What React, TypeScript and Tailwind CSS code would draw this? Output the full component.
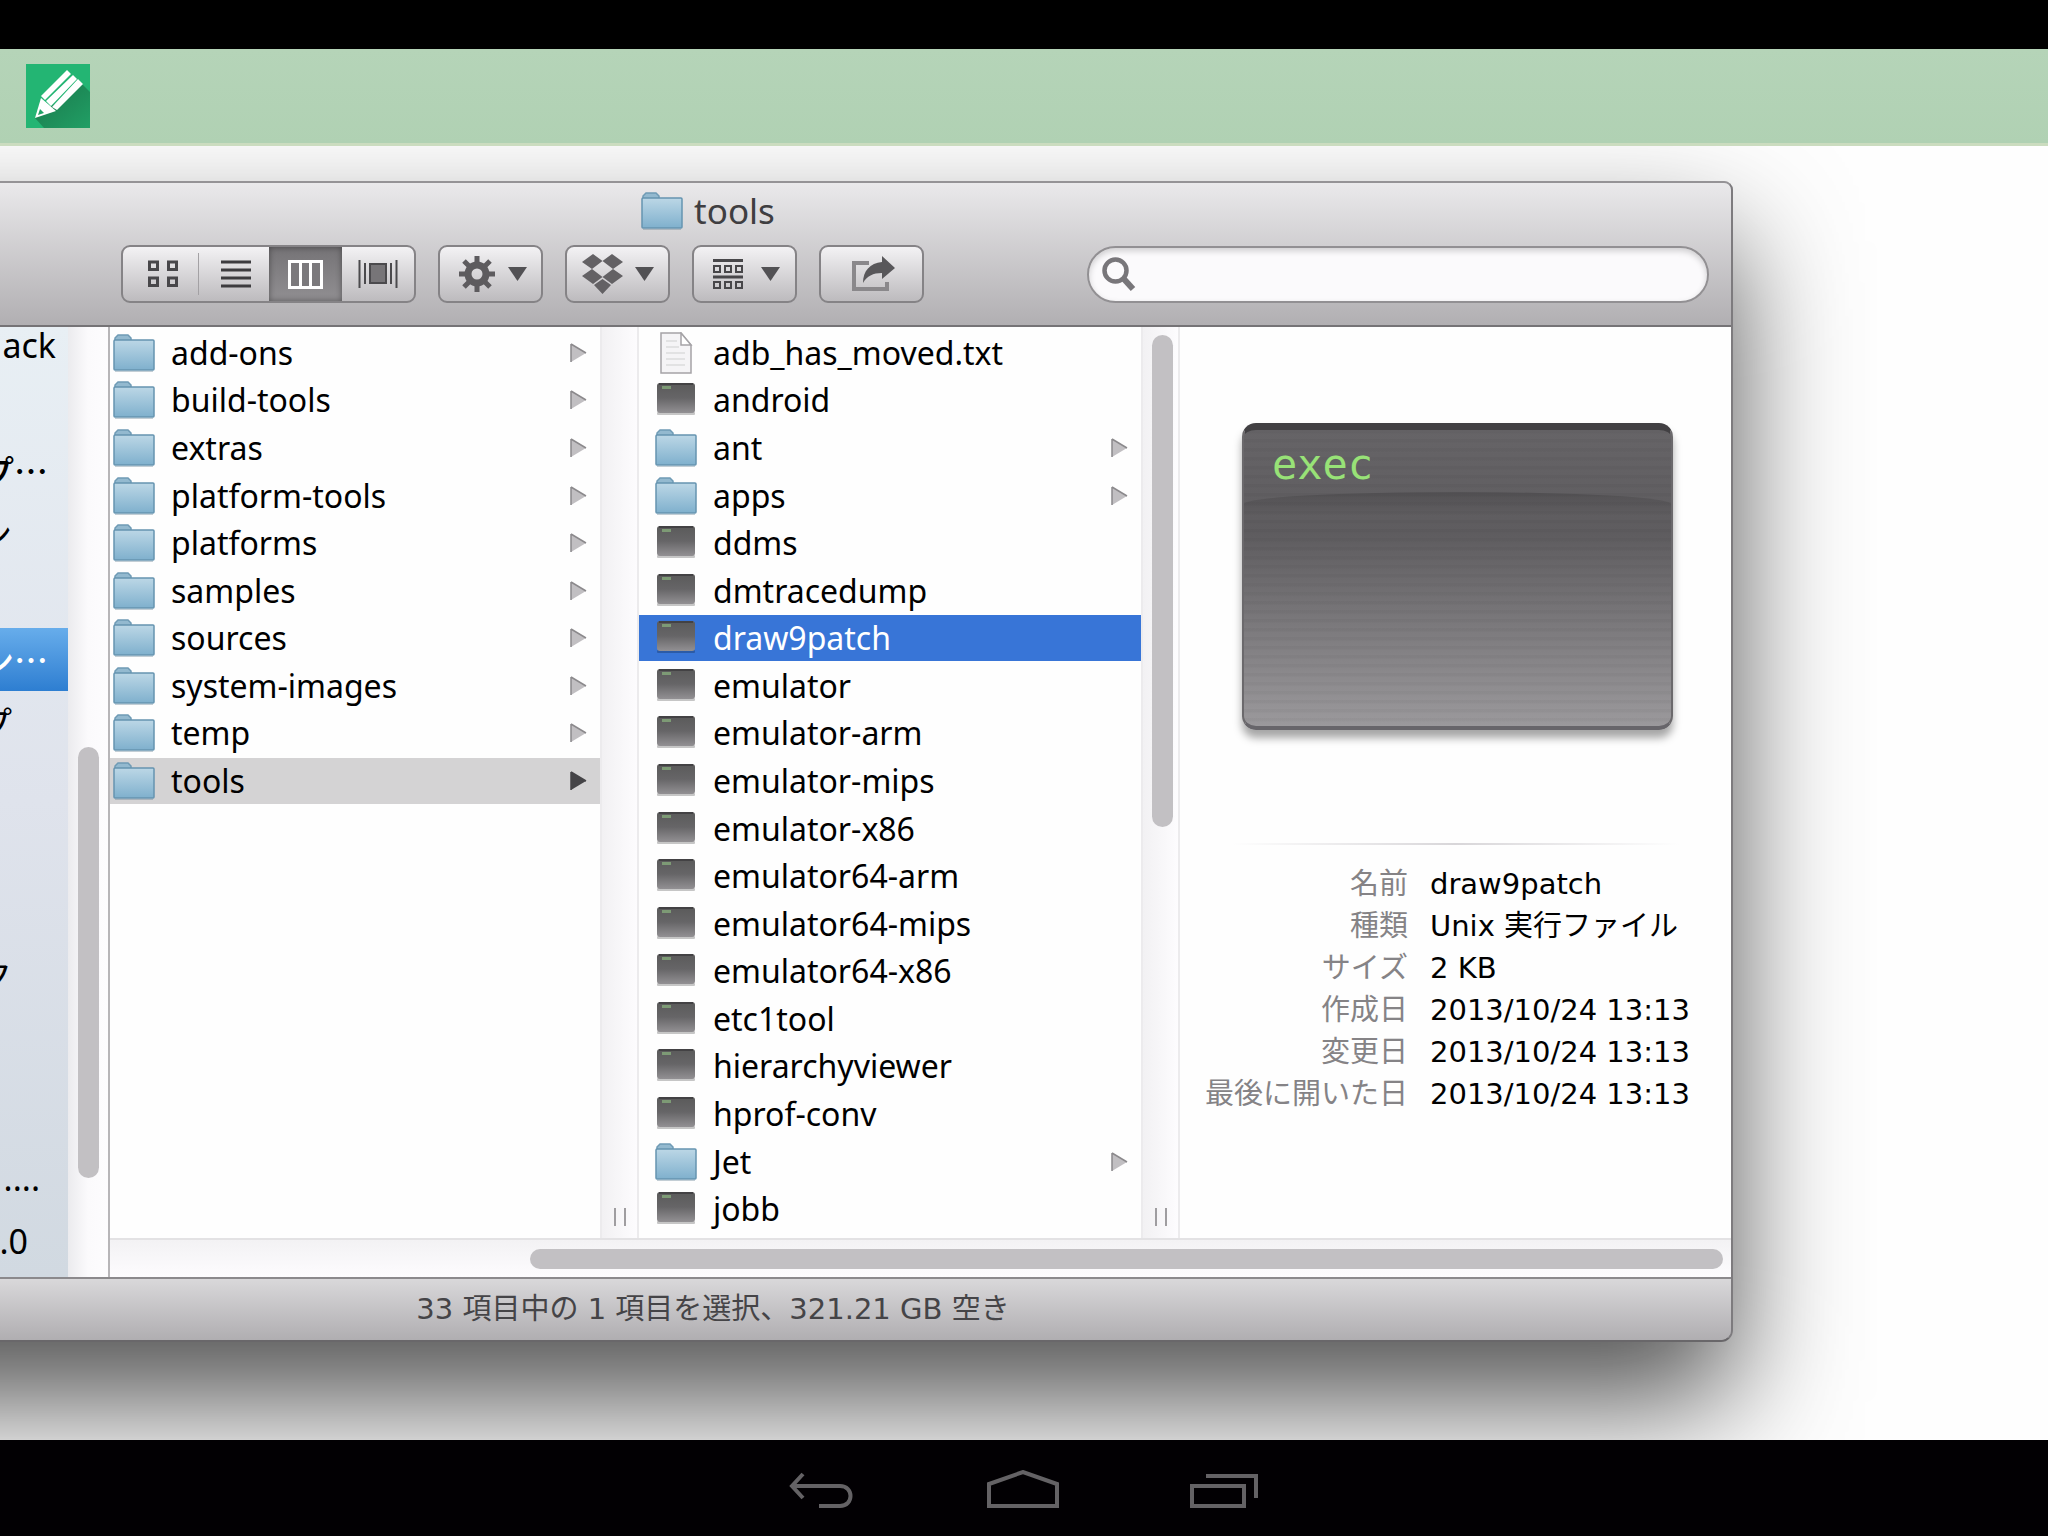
import type { ReactNode } from "react";

type Entry = {
  name: string;
  kind: "folder" | "exec" | "text";
};

const sdkFolders = [
  "add-ons",
  "build-tools",
  "extras",
  "platform-tools",
  "platforms",
  "samples",
  "sources",
  "system-images",
  "temp",
  "tools",
];

const toolEntries: Entry[] = [
  { name: "adb_has_moved.txt", kind: "text" },
  { name: "android", kind: "exec" },
  { name: "ant", kind: "folder" },
  { name: "apps", kind: "folder" },
  { name: "ddms", kind: "exec" },
  { name: "dmtracedump", kind: "exec" },
  { name: "draw9patch", kind: "exec" },
  { name: "emulator", kind: "exec" },
  { name: "emulator-arm", kind: "exec" },
  { name: "emulator-mips", kind: "exec" },
  { name: "emulator-x86", kind: "exec" },
  { name: "emulator64-arm", kind: "exec" },
  { name: "emulator64-mips", kind: "exec" },
  { name: "emulator64-x86", kind: "exec" },
  { name: "etc1tool", kind: "exec" },
  { name: "hierarchyviewer", kind: "exec" },
  { name: "hprof-conv", kind: "exec" },
  { name: "Jet", kind: "folder" },
  { name: "jobb", kind: "exec" },
];

const details = [
  ["名前", "draw9patch"],
  ["種類", "Unix 実行ファイル"],
  ["サイズ", "2 KB"],
  ["作成日", "2013/10/24 13:13"],
  ["変更日", "2013/10/24 13:13"],
  ["最後に開いた日", "2013/10/24 13:13"],
];

// Sidebar labels are cut off on the left, each one ends at its own place
const sidebarRows = [
  { label: "ack", className: "pr-3" },
  { label: "", className: "" },
  { label: "プ…", className: "pr-5 font-['Noto_Sans_CJK_JP',sans-serif] font-medium" },
  { label: "ン", className: "pr-14" },
  { label: "", className: "" },
  { label: "ン…", className: "pr-5 font-['Noto_Sans_CJK_JP',sans-serif] font-medium", selected: true },
  { label: "プ", className: "pr-14" },
  { label: "", className: "" },
  { label: "", className: "" },
  { label: "", className: "" },
  { label: "ク", className: "pr-14" },
  { label: "", className: "" },
  { label: "", className: "mb-3.5" },
  { label: "....", className: "pr-7" },
  { label: ".0", className: "pr-10" },
];

function FolderIcon() {
  return (
    <svg width="42" height="38" viewBox="0 0 42 38" className="shrink-0" aria-hidden="true">
      <defs>
        <linearGradient id="folder" x1="0" y1="0" x2="0" y2="1">
          <stop offset="0" stopColor="#bcd7e6" />
          <stop offset="1" stopColor="#7fb0cd" />
        </linearGradient>
      </defs>
      <path d="M2 10V4L5 1H15L18 4V8Z" fill="#93b9cf" stroke="#6f9bb5" strokeWidth="1.5" />
      <rect x="1" y="6" width="40" height="30" rx="1" fill="url(#folder)" stroke="#6594b0" strokeWidth="1.5" />
      <path d="M2 37.5H40" stroke="#6b8798" strokeOpacity=".4" />
    </svg>
  );
}

function ExecIcon() {
  return (
    <svg width="42" height="38" viewBox="0 0 42 38" className="shrink-0" aria-hidden="true">
      <defs>
        <linearGradient id="exec" x1="0" y1="0" x2="0" y2="1">
          <stop offset="0" stopColor="#5a5a5a" />
          <stop offset=".5" stopColor="#666567" />
          <stop offset="1" stopColor="#929093" />
        </linearGradient>
      </defs>
      <rect x="2" y="31" width="38" height="3" rx="1" fill="#000" fillOpacity=".22" />
      <rect x="2" y="2" width="38" height="30" rx="3" fill="url(#exec)" />
      <path d="M4 3H38" stroke="#434244" strokeWidth="2" />
      <rect x="7" y="5" width="9" height="3" fill="#7d9a75" />
    </svg>
  );
}

function TextFileIcon() {
  return (
    <svg width="42" height="42" viewBox="0 0 42 42" className="shrink-0" aria-hidden="true">
      <path d="M6 1H26L36 13V41H6Z" fill="#f5f4f6" stroke="#a5a3a6" strokeWidth="1.5" />
      <path d="M26 1V13H36Z" fill="#fff" stroke="#a5a3a6" strokeWidth="1.5" />
      <path d="M11 9H22M11 15H24M11 21H30M11 27H30M11 33H30" stroke="#dcdbdd" strokeWidth="1.5" />
    </svg>
  );
}

function Caret() {
  return (
    <svg width="19" height="14" viewBox="0 0 19 14" aria-hidden="true">
      <path d="M0 0H19L9.5 14Z" fill="#525154" />
    </svg>
  );
}

function ColumnRow({
  name,
  icon,
  hasChildren = false,
  className = "",
  arrowClassName = "fill-[#c1bfc2] stroke-[#8b898c]",
}: {
  name: string;
  icon: ReactNode;
  hasChildren?: boolean;
  className?: string;
  arrowClassName?: string;
}) {
  return (
    <li className={`flex min-h-0 items-center ${className}`}>
      {icon}
      <span className="ml-4 flex-1 whitespace-nowrap text-[32px] leading-[40px]">{name}</span>
      {hasChildren && (
        <svg width="17" height="20" viewBox="0 0 17 20" className={`mr-[13px] ${arrowClassName}`} aria-hidden="true">
          <path d="M1 1V19L16 10Z" stroke="none" />
          <path d="M1 1V19M1 1L16 10" fill="none" strokeWidth="1.5" />
        </svg>
      )}
    </li>
  );
}

function Gutter({ children }: { children?: ReactNode }) {
  return (
    <div className="flex w-[39px] shrink-0 flex-col items-center justify-end border-x-2 border-[#ecebed] bg-linear-to-r from-[#f2f1f3] to-[#fdfcfe] pt-2 pb-3">
      {children}
      <div className="mt-auto h-[18px] w-3 border-x-2 border-[#9f9da0]" />
    </div>
  );
}

function ToolButton({
  label,
  className = "gap-3",
  children,
}: {
  label: string;
  className?: string;
  children: ReactNode;
}) {
  return (
    <button
      type="button"
      aria-label={label}
      className={`flex h-[58px] w-[105px] shrink-0 items-center justify-center rounded-[9px] border-2 border-[#858386] bg-linear-to-b from-[#f3f2f4] to-[#bdbbbe] ${className}`}
    >
      {children}
    </button>
  );
}

function Toolbar() {
  return (
    <div className="mt-1.5 flex items-center gap-[22px] pr-[22px] pl-[121px]">
      <div className="flex h-[58px] w-[295px] shrink-0 overflow-hidden rounded-[9px] border-2 border-[#858386] bg-linear-to-b from-[#f3f2f4] to-[#bdbbbe]">
        <button type="button" aria-label="Icon view" className="flex w-[75px] items-center justify-center pl-1">
          <svg width="30" height="28" viewBox="0 0 30 28" fill="none" stroke="#48474a" strokeWidth="3">
            <path d="M1.500 2H9.500V9.500H1.500ZM20.500 2H28.500V9.500H20.500ZM1.500 18H9.500V25.500H1.500ZM20.500 18H28.500V25.500H20.500Z" />
          </svg>
        </button>
        <div className="my-1.5 w-px bg-[#a3a1a4]" />
        <button type="button" aria-label="List view" className="flex w-[70px] items-center justify-center pl-1">
          <svg width="30" height="28" viewBox="0 0 30 28" stroke="#3d3c3f" strokeWidth="3">
            <path d="M0 2H30M0 10H30M0 18H30M0 26H30" />
          </svg>
        </button>
        <button
          type="button"
          aria-label="Column view"
          aria-pressed="true"
          className="flex w-[73px] items-center justify-center bg-linear-to-b from-[#757376] to-[#918f92] shadow-[inset_0_0_6px_rgba(0,0,0,0.4)]"
        >
          <svg width="35" height="29" viewBox="0 0 35 29" fill="#7b797c" stroke="#fff" strokeWidth="3">
            <path d="M1.500 1.500H33.500V27.500H1.500ZM12.500 1.500V27.500M22.500 1.500V27.500" />
          </svg>
        </button>
        <button type="button" aria-label="Cover Flow view" className="flex flex-1 items-center justify-center">
          <svg width="40" height="28" viewBox="0 0 40 28" stroke="#4b4a4d" strokeWidth="2">
            <rect x="12" y="4" width="16" height="19" fill="#777578" />
            <path d="M1.500 0V28M7 3V24M33 3V24M38.500 0V28" />
          </svg>
        </button>
      </div>

      <ToolButton label="Actions" className="gap-3 pl-1">
        <svg width="38" height="38" viewBox="-19 -19 38 38" fill="none" stroke="#5d5b5e" aria-hidden="true">
          <circle r="9" strokeWidth="7" />
          <path
            d="M0 -11V-18M0 11V18M-11 0H-18M11 0H18M8 -8L13 -13M8 8L13 13M-8 8L-13 13M-8 -8L-13 -13"
            strokeWidth="5"
          />
        </svg>
        <Caret />
      </ToolButton>

      <ToolButton label="Dropbox">
        <svg width="41" height="40" viewBox="0 0 41 40" fill="#636164" aria-hidden="true">
          <path d="M11 0L20.500 7L10 15L0 8ZM30 0L41 8L31 15L20.500 7ZM10 15L20.500 23L11 30L0 22ZM31 15L41 22L30 30L20.500 23ZM20.500 25L29 31L20.500 40L12 31Z" />
        </svg>
        <Caret />
      </ToolButton>

      <ToolButton label="Arrange" className="gap-[18px] pl-1">
        <svg width="30" height="31" viewBox="0 0 30 31" fill="none" stroke="#48474a" aria-hidden="true">
          <path d="M0 1.500H30M0 18H30" strokeWidth="3" />
          <path d="M1 7H7V13H1ZM12 7H18V13H12ZM23 7H29V13H23ZM1 23H7V29H1ZM12 23H18V29H12ZM23 23H29V29H23Z" strokeWidth="2" />
        </svg>
        <Caret />
      </ToolButton>

      <ToolButton label="Share" className="pl-1">
        <svg width="44" height="36" viewBox="0 0 44 36" aria-hidden="true">
          <path d="M17 7H2V33H35V26" fill="none" stroke="#8a888b" strokeWidth="4" />
          <path d="M30 0L43 12L30 23V17C21 17 15 20 11 27C11 15 18 7 30 6Z" fill="#58575a" />
        </svg>
      </ToolButton>

      <label className="ml-[141px] flex h-[57px] flex-1 items-center rounded-full border-2 border-[#929093] bg-[#fbfafc] pl-3 shadow-[inset_0_3px_6px_rgba(0,0,0,0.18)]">
        <svg width="36" height="36" viewBox="0 0 36 36" fill="none" stroke="#78767a" aria-hidden="true">
          <circle cx="14.500" cy="14.500" r="11" strokeWidth="4.500" />
          <path d="M22 22L32 33" strokeWidth="6" />
        </svg>
        <input type="search" aria-label="Search" className="ml-2 h-full min-w-0 flex-1 bg-transparent text-[29px] outline-none" />
      </label>
    </div>
  );
}

function Sidebar() {
  return (
    <aside className="flex shrink-0 overflow-hidden border-r-2 border-[#b7b5b8]">
      <div className="flex w-[68px] bg-linear-to-b from-[#e8eff4] via-[#dfe3ec] to-[#d1d9e1]">
        <ul className="-mt-3.5 h-0 w-full text-[34px] leading-none">
          {sidebarRows.map((row, index) => (
            <li
              key={index}
              className={`flex h-[63px] items-center justify-end whitespace-nowrap ${row.className} ${
                row.selected ? "bg-linear-to-b from-[#67adeb] to-[#2d7ed1] text-white" : ""
              }`}
            >
              {row.label}
            </li>
          ))}
        </ul>
      </div>
      <div className="flex w-10 flex-col bg-linear-to-r from-[#ebebee] via-[#fbfafc] to-[#fdfcfe] pl-2.5">
        <div className="mt-[420px] mb-[99px] w-[21px] flex-1 rounded-full bg-[#c2c0c3]" />
      </div>
    </aside>
  );
}

function Preview() {
  return (
    <section className="min-w-0 flex-1 overflow-hidden bg-[#fefefe]">
      <div className="mt-24 mr-[58px] ml-[62px] h-[307px] overflow-hidden rounded-[14px] border-x-2 border-t-[7px] border-b-4 border-x-[#6b696c] border-t-[#424043] border-b-[#67656a] bg-[repeating-linear-gradient(to_bottom,rgba(0,0,0,0.03)_0px,rgba(0,0,0,0.03)_3px,transparent_4px,transparent_9px),linear-gradient(to_bottom,#666467_0%,#5e5c5f_35%,#9b999c_100%)] shadow-[0_8px_8px_rgba(0,0,0,0.35)]">
        <p className="px-7 pt-2 font-['DejaVu_Sans_Mono',monospace] text-[42px] leading-[54px] text-[#98e277]">exec</p>
        <div className="h-6 rounded-t-[100%] bg-linear-to-b from-black/15 to-transparent" />
      </div>
      <div className="mx-[52px] mt-[113px] h-0.5 bg-linear-to-r from-transparent via-[#d8d6d9] to-transparent" />
      <dl className="mt-[18px] grid grid-cols-[228px_1fr] gap-x-[22px] whitespace-nowrap font-['DejaVu_Sans','Noto_Sans_CJK_JP',sans-serif] text-[29px] leading-[42px]">
        {details.map(([term, value]) => (
          <div key={term} className="contents">
            <dt className="text-right text-[#858386]">{term}</dt>
            <dd>{value}</dd>
          </div>
        ))}
      </dl>
    </section>
  );
}

function FinderWindow() {
  return (
    <div className="-ml-40 flex flex-1 flex-col rounded-tr-[9px] rounded-br-xl bg-[#b1afb2] pl-40 shadow-[0_60px_120px_rgba(0,0,0,0.68)]">
      <div className="flex flex-1 flex-col overflow-hidden rounded-tr-[9px] rounded-br-xl border-y-2 border-r-2 border-t-[#959396] border-r-[#7d7b7e] border-b-[#69676a]">
        <header className="border-b-2 border-[#757376] bg-linear-to-b from-[#eae9eb] to-[#b1afb2] pb-[22px]">
          <h1 className="flex h-14 items-center justify-center gap-[11px] pr-[315px] text-[35px] text-[#3f3e41]">
            <FolderIcon />
            tools
          </h1>
          <Toolbar />
        </header>

        <div className="flex flex-1">
          <Sidebar />
          <div className="flex min-w-0 flex-1 flex-col">
            <div className="flex flex-1 bg-[#fefefe]">
              <ul className="grid w-[490px] shrink-0 grid-rows-[repeat(19,1fr)] gap-y-0.5 pt-[3px] pb-1.5">
                {sdkFolders.map((name) => (
                  <ColumnRow
                    key={name}
                    name={name}
                    icon={<FolderIcon />}
                    hasChildren
                    className={name === "tools" ? "bg-[#d4d3d4] pl-[3px]" : "pl-[3px]"}
                    arrowClassName={name === "tools" ? "fill-[#454447] stroke-[#454447]" : undefined}
                  />
                ))}
              </ul>
              <Gutter />
              <ul className="grid w-[502px] shrink-0 grid-rows-[repeat(19,1fr)] gap-y-0.5 pt-[3px] pb-1.5">
                {toolEntries.map(({ name, kind }) => (
                  <ColumnRow
                    key={name}
                    name={name}
                    icon={kind === "folder" ? <FolderIcon /> : kind === "exec" ? <ExecIcon /> : <TextFileIcon />}
                    hasChildren={kind === "folder"}
                    className={name === "draw9patch" ? "bg-[#3875d7] pl-4 text-white" : "pl-4"}
                  />
                ))}
              </ul>
              <Gutter>
                <div className="mr-[5px] h-[492px] w-[21px] self-end rounded-full bg-[#c2c0c3]" />
              </Gutter>
              <Preview />
            </div>
            <div className="flex h-[39px] items-center border-t-2 border-[#e3e2e4] bg-linear-to-b from-[#f3f2f4] to-[#fdfcfe] pr-2 pl-[420px]">
              <div className="h-5 flex-1 rounded-full bg-[#c2c0c3]" />
            </div>
          </div>
        </div>

        <footer className="flex h-[63px] items-center justify-center border-t-2 border-[#8b898c] bg-linear-to-b from-[#d9d8da] to-[#b0aeb1] pr-[305px] font-['DejaVu_Sans','Noto_Sans_CJK_JP',sans-serif] text-[29px] text-[#454447]">
          33 項目中の 1 項目を選択、321.21 GB 空き
        </footer>
      </div>
    </div>
  );
}

function NavButton({ label, children }: { label: string; children: ReactNode }) {
  return (
    <button type="button" aria-label={label} className="flex w-[201px] items-center justify-center">
      <svg width="72" height="40" viewBox="0 0 72 40" fill="none" stroke="#646265" strokeWidth="4">
        {children}
      </svg>
    </button>
  );
}

export default function App() {
  return (
    <div
      lang="ja"
      className="flex min-h-screen flex-col bg-white font-['Noto_Sans','Noto_Sans_CJK_JP',sans-serif] text-black"
    >
      <div className="h-[49px] bg-black" />
      <header className="flex h-[97px] items-center border-b-3 border-[#cbdcbf] bg-linear-to-b from-[#b5d4b8] to-[#b0d1b3] pl-[26px]">
        <svg width="64" height="64" viewBox="0 0 64 64" role="img" aria-label="Draw">
          <defs>
            <linearGradient id="pencil-shadow" x1="0.2" y1="0.2" x2="1" y2="1">
              <stop offset="0" stopColor="#1b7f50" />
              <stop offset="1" stopColor="#219f65" />
            </linearGradient>
          </defs>
          <rect width="64" height="64" fill="#23b573" />
          <path d="M56 20L64 28V64H18L9 54Z" fill="url(#pencil-shadow)" />
          <path d="M41 6L45 10L19 36L15 32ZM47 11L51 15L25 42L20 37ZM52 15L57 20L31 46L26 43Z" fill="#fff" />
          <path d="M15 34L30 47L9 54Z" fill="#fff" />
          <path d="M14 45L18 49L12 51Z" fill="#21a267" />
        </svg>
      </header>

      <main className="flex flex-1 flex-col overflow-hidden bg-[#fefefe] pt-[35px] pr-[315px] pb-[98px]">
        <FinderWindow />
      </main>

      <nav className="flex h-24 justify-center bg-[#020003] pt-1 pr-[3px]">
        <NavButton label="Back">
          <path d="M17 4L6 16L17 28M6 16H54C68 16 68 36 54 36H33" />
        </NavButton>
        <NavButton label="Home">
          <path d="M2 36V14L36 2L70 14V36Z" />
        </NavButton>
        <NavButton label="Recent apps">
          <path d="M4 16H56V36H4ZM18 6H68V28" />
        </NavButton>
      </nav>
    </div>
  );
}
